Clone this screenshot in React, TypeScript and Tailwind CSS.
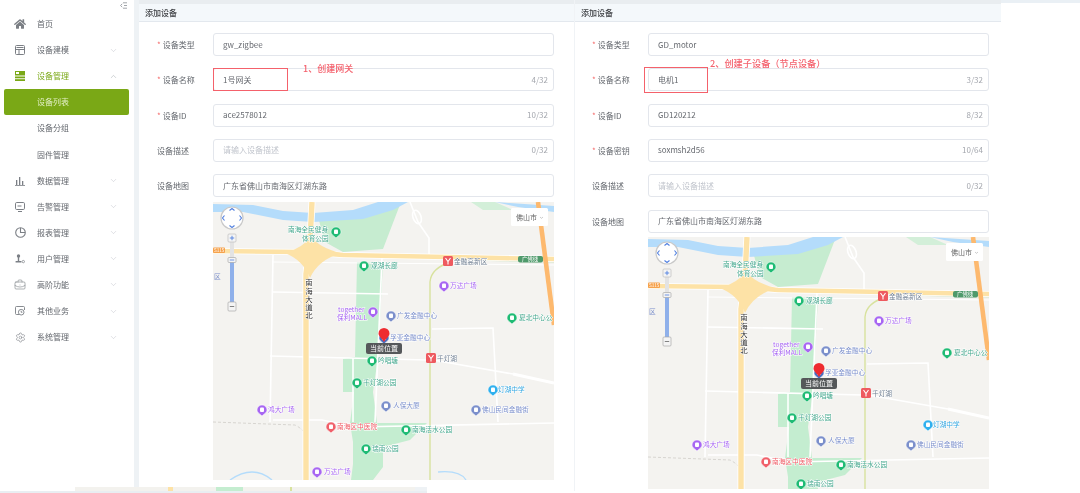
import type { ReactNode } from "react"
import { ChevronDown, ChevronUp, Settings, BriefcaseBusiness } from "lucide-react"
import { FaHome } from "react-icons/fa"

const Model = () => (
  <svg width="10" height="10" viewBox="0 0 10 10" fill="none" stroke="#7b7f85" strokeWidth="1">
    <rect x="0.5" y="0.5" width="9" height="9" rx="1" />
    <path d="M0.5 4.5h9M4 4.5v5M1.5 2.5h7" />
  </svg>
)
const DeviceMgr = () => (
  <svg width="10" height="10" viewBox="0 0 10 10" fill="#7aa816">
    <rect x="0" y="0" width="10" height="4.5" />
    <rect x="0" y="5.5" width="10" height="1.8" />
    <rect x="0" y="8.2" width="10" height="1.8" />
    <rect x="1" y="1" width="3" height="2" fill="#fff" />
  </svg>
)
const Bars = () => (
  <svg width="10" height="10" viewBox="0 0 10 10" fill="#7b7f85">
    <rect x="1" y="4" width="1.3" height="5" />
    <rect x="4" y="1" width="1.3" height="8" />
    <rect x="7" y="5" width="1.3" height="4" />
    <rect x="0" y="9" width="10" height="0.8" />
  </svg>
)
const Alarm = () => (
  <svg width="10" height="10" viewBox="0 0 10 10" fill="none" stroke="#7b7f85" strokeWidth="1">
    <rect x="0.5" y="0.5" width="9" height="7" rx="1.2" />
    <path d="M3 9.5h4M2.5 4h4" />
  </svg>
)
const Report = () => (
  <svg width="11" height="11" viewBox="0 0 11 11" fill="none" stroke="#7b7f85" strokeWidth="1.1">
    <circle cx="5.5" cy="5.5" r="4.8" />
    <path d="M5.5 1v4.5h4.5" />
  </svg>
)
const User = () => (
  <svg width="10" height="10" viewBox="0 0 10 10" fill="#7b7f85">
    <circle cx="3.5" cy="2" r="1.7" />
    <rect x="2.8" y="3" width="1.4" height="4" />
    <rect x="0.5" y="7" width="6" height="1.6" rx="0.5" />
    <circle cx="8.3" cy="7.6" r="1.2" fill="none" stroke="#7b7f85" strokeWidth="0.7" />
  </svg>
)
const Other = () => (
  <svg width="10" height="10" viewBox="0 0 10 10" fill="none" stroke="#7b7f85" strokeWidth="0.9">
    <path d="M4 8.5H1.5a1 1 0 0 1-1-1v-6a1 1 0 0 1 1-1h7a1 1 0 0 1 1 1V4" />
    <circle cx="6.2" cy="6.2" r="2.8" />
    <path d="M6.2 4.8v1.5h1.2" />
  </svg>
)
const Collapse = () => (
  <svg width="7" height="7" viewBox="0 0 7 7" fill="none" stroke="#8a8f96" strokeWidth="0.8">
    <path d="M3 0.8h4M3 6.2h4M4 3.5h3M2.2 1.8L0.6 3.5l1.6 1.7" />
  </svg>
)

const menu: { label: string; icon: ReactNode; arrow?: "up" | "down"; state?: "open" | "active" }[] = [
  { label: "首页", icon: <FaHome size={12} color="#7b7f85" /> },
  { label: "设备建模", icon: <Model />, arrow: "down" },
  { label: "设备管理", icon: <DeviceMgr />, arrow: "up", state: "open" },
  { label: "设备列表", icon: null, state: "active" },
  { label: "设备分组", icon: null },
  { label: "固件管理", icon: null },
  { label: "数据管理", icon: <Bars />, arrow: "down" },
  { label: "告警管理", icon: <Alarm />, arrow: "down" },
  { label: "报表管理", icon: <Report />, arrow: "down" },
  { label: "用户管理", icon: <User />, arrow: "down" },
  { label: "高阶功能", icon: <BriefcaseBusiness size={12} color="#7b7f85" strokeWidth={1.2} />, arrow: "down" },
  { label: "其他业务", icon: <Other />, arrow: "down" },
  { label: "系统管理", icon: <Settings size={11} color="#7b7f85" strokeWidth={1.3} />, arrow: "down" },
]

function Sidebar() {
  return (
    <aside className="w-[134px] shrink-0 bg-white">
      <div className="h-[11px] flex justify-end pr-[7px] pt-[2px]">
        <Collapse />
      </div>
      {menu.map((m) => (
        <div
          key={m.label}
          className={
            m.state === "active"
              ? "h-[26.1px] ml-[4px] mr-[5px] flex items-center rounded-[2px] bg-[#7aa816] text-[8px] text-[#e3efc6]"
              : "h-[26.1px] ml-[4px] mr-[5px] flex items-center text-[8px] " +
                (m.state === "open" ? "text-[#7aa816]" : "text-[#63676d]")
          }
        >
          <span className="w-[33px] pl-[7px] pr-[8px] flex justify-center shrink-0">{m.icon}</span>
          <span className="flex-1">{m.label}</span>
          {m.arrow === "down" && <ChevronDown size={9} color="#b9bdc4" strokeWidth={1.2} className="mr-[11px]" />}
          {m.arrow === "up" && <ChevronUp size={9} color="#9aa0a6" strokeWidth={1.2} className="mr-[11px]" />}
        </div>
      ))}
    </aside>
  )
}

function Field(props: {
  label: string
  required?: boolean
  value?: string
  placeholder?: string
  count?: string
  children?: ReactNode
}) {
  return (
    <div className="flex h-[23px] mb-[12.33px]">
      <label className="w-[56px] shrink-0 text-[8px] leading-[23px] text-[#63676d]">
        {props.required && <span className="text-[#f56c6c] mr-[2px]">*</span>}
        {props.label}
      </label>
      <div className="relative w-[341px] h-[23px] pl-[9px] pr-[5px] flex items-center justify-between border border-[#e3e6ec] rounded-[3px] bg-white text-[8px]">
        {props.value ? (
          <span className="text-[#66696f]">{props.value}</span>
        ) : (
          <span className="text-[#c0c4cc]">{props.placeholder}</span>
        )}
        {props.count && <span className="text-[#a3a6ad]">{props.count}</span>}
        {props.children}
      </div>
    </div>
  )
}

function Poi(p: { x: number; y: number; c: string; t: string; tc: string; lx?: number; ly?: number }) {
  return (
    <g>
      <path
        d={`M${p.x - 5} ${p.y} a5 5 0 1 1 10 0 c0 2.6 -3 4 -5 6 c-2 -2 -5 -3.4 -5 -6z`}
        fill={p.c}
        stroke="#fff"
        strokeWidth="0.5"
      />
      <rect x={p.x - 2} y={p.y - 2.4} width="4" height="4.4" rx="1" fill="#fff" />
      <text
        x={p.lx ?? p.x + 6}
        y={(p.ly ?? p.y) + 2.4}
        fontSize="6.7"
        fill={p.tc}
        stroke="#fff"
        strokeWidth="1"
        className="[paint-order:stroke]"
      >
        {p.t}
      </text>
    </g>
  )
}

function Metro(p: { x: number; y: number; t: string; c: string }) {
  return (
    <g>
      <rect x={p.x - 5} y={p.y - 5} width="10" height="10" rx="1.5" fill="#ee5a5f" />
      <path d="M-2.5 -3 L0 0.5 L2.5 -3 M0 0.5 V3.5" transform={`translate(${p.x} ${p.y})`} stroke="#fff" strokeWidth="1.1" fill="none" />
      <text x={p.x + 6} y={p.y + 3} fontSize="6.7" fill={p.c} stroke="#fff" strokeWidth="1" className="[paint-order:stroke]">
        {p.t}
      </text>
    </g>
  )
}

const green = "#1fbb74"
const gText = "#45a88e"
const purple = "#a766f2"
const slate = "#7b8fcb"

function MapView({ height }: { height: number }) {
  return (
    <svg width="341" height={height} viewBox={`0 0 341 ${height}`} className="block bg-[#f4f3f0]">
      {/* parks */}
      <path d="M105 15 L145 12 L170 0 L188 0 L170 47 L130 50 L112 40Z" fill="#c6ecd0" />
      <path d="M258 0 L282 0 L300 8 L270 8Z" fill="#d3efd9" />
      <path d="M144 60 L170 60 L165 155 L160 190 L164 221 L214 221 L197 238 L170 245 L170 265 L160 278 L138 278 L140 262 L140 240 L137 221 L141 190 L130 190 L130 157 L142 155Z" fill="#c4edd0" />
      {/* water */}
      <path d="M0 2 L40 3 L70 9 L100 11 L140 8 L165 0 L195 0 L180 8 L150 17 L100 20 L70 18 L30 10 L0 10Z" fill="#b4dcfb" />
      <path d="M282 0 L341 4 L341 10 L305 5Z" fill="#b4dcfb" />
      <path d="M17 278 Q40 262 59 278 M225 270 Q247 268 253 278" stroke="#b4dcfb" strokeWidth="1.4" fill="none" />
      {/* white roads */}
      <g stroke="#fff" strokeWidth="1.6" fill="none">
        <path d="M60 53 L57 220" />
        <path d="M60 90 L175 92" />
        <path d="M57 154 L214 158" />
        <path d="M220 158 L300 172" />
        <path d="M300 172 L341 181" strokeWidth="3" />
        <path d="M169 56 L162 220" />
        <path d="M140 156 L140 220" />
        <path d="M197 0 L205 20 L216 36 L216 55" />
        <ellipse cx="204" cy="15" rx="4" ry="7" transform="rotate(-20 204 15)" />
        <path d="M219 127 L280 126 L285 220" />
        <path d="M60 218 L109 218 L142 225 L341 221" />
        <path d="M60 60 L341 63" strokeWidth="1" />
      </g>
      <path d="M0 220 L82 223 Q92 228 94 236" stroke="#cfcdc8" strokeWidth="0.8" strokeDasharray="3 2" fill="none" />
      {/* metro line */}
      <path d="M238 60 Q218 66 217 80 L217 300" stroke="#d8e29e" strokeWidth="1.4" fill="none" />
      <path d="M255 58 L341 60" stroke="#cfe5c5" strokeWidth="1" />
      {/* main roads */}
      <path d="M0 49 L90 50 L130 53 L341 57" stroke="#fff" strokeWidth="6" fill="none" />
      <path d="M0 49 L90 50 L130 53 L341 57" stroke="#fde2a6" strokeWidth="4.4" fill="none" />
      <path d="M99 0 L97 40 L93 72 L93 300" stroke="#fff" strokeWidth="7" fill="none" />
      <path d="M99 0 L97 40 L93 72 L93 300" stroke="#fde2a6" strokeWidth="5.4" fill="none" />
      <path d="M72 51 Q90 46 98 34 Q106 46 128 51 Q105 58 97 76 Q90 58 72 51Z" fill="#fde2a6" />
      <path d="M325 0 L341 123" stroke="#fdb96e" strokeWidth="4.6" fill="none" />
      <rect x="0" y="45.5" width="12" height="5.5" rx="1" fill="#f6a24c" />
      <text x="1" y="50" fontSize="4.6" fill="#fff">S115</text>
      <rect x="305" y="54" width="25" height="6.4" rx="2" fill="#4f9a6b" />
      <text x="309" y="59.2" fontSize="5.4" fill="#fff">广佛线</text>
      <text x="1" y="77" fontSize="6.7" fill={slate}>区</text>

      <text fontSize="7.4" fill="#333" stroke="#fff" strokeWidth="1" className="[paint-order:stroke]" textAnchor="middle">
        <tspan x="96" y="83">南</tspan>
        <tspan x="96" y="91.5">海</tspan>
        <tspan x="96" y="100">大</tspan>
        <tspan x="96" y="108">道</tspan>
        <tspan x="96" y="116">北</tspan>
      </text>

      {/* labels */}
      <text fontSize="6.7" fill={gText} stroke="#fff" strokeWidth="1" className="[paint-order:stroke]">
        <tspan x="75" y="30">南海全民健身</tspan>
        <tspan x="89" y="39">体育公园</tspan>
      </text>
      <Poi x={123} y={30} c={green} t="" tc={gText} />
      <Poi x={151} y={64} c={green} t="观湖长廊" tc={gText} lx={158} />
      <Metro x={235} y={59} t="金融高新区" c="#6f7f92" />
      <Poi x={231} y={84} c={purple} t="万达广场" tc={purple} lx={237} />
      <text fontSize="6.7" fill={purple} stroke="#fff" strokeWidth="1" className="[paint-order:stroke]">
        <tspan x="125" y="110">together</tspan>
        <tspan x="124" y="118">保利MALL</tspan>
      </text>
      <Poi x={160} y={110} c={purple} t="" tc={purple} />
      <Poi x={178} y={114} c={slate} t="广发金融中心" tc={slate} lx={184} />
      <Poi x={299} y={116} c={green} t="夏北中心公" tc={gText} lx={306} />
      <Poi x={171} y={136} c="#4a6fc0" t="孚亚金融中心" tc={slate} lx={177} />
      <Poi x={159} y={159} c={green} t="吟唱塘" tc={gText} lx={165} />
      <Metro x={218} y={156} t="千灯湖" c="#6f7f92" />
      <Poi x={144} y={181} c={green} t="千灯湖公园" tc={gText} lx={150} />
      <Poi x={280} y={188} c="#2fb0ee" t="灯湖中学" tc="#35a7e0" lx={285} />
      <Poi x={173} y={204} c={slate} t="人保大厦" tc={slate} lx={180} />
      <Poi x={263} y={208} c={slate} t="佛山民间金融街" tc={slate} lx={269} />
      <Poi x={49} y={208} c={purple} t="鸿大广场" tc={purple} lx={55} />
      <Poi x={118} y={225} c="#f0606a" t="南海区中医院" tc="#f0606a" lx={124} />
      <Poi x={193} y={228} c={green} t="南海活水公园" tc={gText} lx={199} />
      <Poi x={153} y={247} c={green} t="瑞南公园" tc={gText} lx={159} />
      <Poi x={104} y={270} c={purple} t="万达广场" tc={purple} lx={111} />

      {/* current position */}
      <path d="M165.5 131.5 a5.5 5.5 0 1 1 11 0 c0 3 -3.5 5 -5.5 8.5 c-2 -3.5 -5.5 -5.5 -5.5 -8.5z" fill="#ee2b30" />
      <rect x="153" y="141" width="36" height="11" rx="2" fill="#55585a" />
      <text x="171" y="149" fontSize="7" fill="#fff" textAnchor="middle">当前位置</text>

      {/* zoom control */}
      <circle cx="19" cy="16" r="11" fill="#fff" stroke="#c9c9c9" strokeWidth="1.2" />
      <path d="M16.5 8.5 L19 6.5 L21.5 8.5 M16.5 23.5 L19 25.5 L21.5 23.5 M11.5 13.5 L9.5 16 L11.5 18.5 M26.5 13.5 L28.5 16 L26.5 18.5" stroke="#4f7fe0" strokeWidth="1.1" fill="none" />
      <rect x="17" y="40" width="4" height="18" fill="#e3e3e3" />
      <rect x="17" y="58" width="4" height="42" fill="#8fb0ea" />
      <rect x="15" y="32" width="8" height="8" rx="1" fill="#f4f4f4" stroke="#bdbdbd" strokeWidth="0.7" />
      <path d="M16.8 36 h4.4 M19 33.8 v4.4" stroke="#4f7fe0" strokeWidth="0.9" />
      <rect x="15" y="55.5" width="8" height="5" rx="1" fill="#f4f4f4" stroke="#a9a9a9" strokeWidth="0.7" />
      <path d="M16.8 58 h4.4" stroke="#4f7fe0" strokeWidth="0.8" />
      <rect x="15" y="100" width="8" height="9" rx="1" fill="#f4f4f4" stroke="#a9a9a9" strokeWidth="0.7" />
      <path d="M16.8 104.5 h4.4" stroke="#666" strokeWidth="0.8" />

      {/* city picker */}
      <rect x="298" y="6" width="37" height="18" rx="1.5" fill="#fff" />
      <text x="303" y="17.5" fontSize="7" fill="#666">佛山市</text>
      <path d="M327 15 l1.5 1.3 l1.5 -1.3" stroke="#aaa" strokeWidth="0.6" fill="none" />
    </svg>
  )
}

function PanelHeader() {
  return (
    <>
      <div className="h-[4px] bg-[#e9edf0]" />
      <div className="h-[18px] bg-[#f4f8fb] border-b border-[#e3e8ee] pl-[6px] text-[8px] leading-[17px] font-medium text-[#3d3f43]">
        添加设备
      </div>
    </>
  )
}

const ADDR = "广东省佛山市南海区灯湖东路"

export default function App() {
  return (
    <div className="relative w-[1080px] h-[493px] overflow-hidden bg-white font-['Noto_Sans_CJK_SC','Noto_Sans',sans-serif] blur-[0.4px]">
      <div className="flex h-[491px]">
        <Sidebar />
        <div className="w-[5px] shrink-0 bg-[#eef2f5]" />

        <section className="w-[435px] shrink-0 bg-white">
          <PanelHeader />
          <div className="pl-[18px] pt-[11px]">
            <Field label="设备类型" required value="gw_zigbee" />
            <Field label="设备名称" required value="1号网关" count="4/32">
              <div className="absolute left-[-1px] top-[-1px] w-[75px] h-[23px] border-[1.5px] border-[#f4616b]" />
              <span className="absolute left-[89px] top-[-6px] text-[9px] leading-[12px] font-medium whitespace-nowrap text-[#f4606c]">
                1、创建网关
              </span>
            </Field>
            <Field label="设备ID" required value="ace2578012" count="10/32" />
            <Field label="设备描述" placeholder="请输入设备描述" count="0/32" />
            <Field label="设备地图" value={ADDR} />
            <div className="ml-[56px] mt-[-8px]">
              <MapView height={278} />
            </div>
          </div>
        </section>

        <section className="w-[427px] shrink-0 bg-white border-l border-[#f0f3f6]">
          <PanelHeader />
          <div className="pl-[17px] pt-[11px]">
            <Field label="设备类型" required value="GD_motor" />
            <Field label="设备名称" required value="电机1" count="3/32">
              <div className="absolute left-[-5px] top-[-2px] w-[64px] h-[26px] border-[1.5px] border-[#f4616b]" />
              <span className="absolute left-[61px] top-[-12px] text-[9.2px] leading-[12px] font-medium whitespace-nowrap text-[#f4606c]">
                2、创建子设备（节点设备）
              </span>
            </Field>
            <Field label="设备ID" required value="GD120212" count="8/32" />
            <Field label="设备密钥" required value="soxmsh2d56" count="10/64" />
            <Field label="设备描述" placeholder="请输入设备描述" count="0/32" />
            <Field label="设备地图" value={ADDR} />
            <div className="ml-[56px] mt-[-8px]">
              <MapView height={252} />
            </div>
          </div>
        </section>

        <div className="flex-1">
          <div className="h-[3px] bg-[#eaf0f5]" />
        </div>
      </div>

      <div className="flex h-[2px]">
        <div className="w-[427px] bg-[#e9eef2]" />
      </div>

      {/* leftover strip of the screenshot below the panels */}
      <div className="absolute left-[75px] top-[487px] h-[4px] flex">
        <div className="w-[93px] bg-[#f3f2ee]" />
        <div className="w-[5px] bg-[#fde2a6]" />
        <div className="w-[43px] bg-[#f3f2ee]" />
        <div className="w-[27px] bg-[#c4edd0]" />
        <div className="w-[47px] bg-[#f3f2ee]" />
        <div className="w-[2px] bg-[#d8e29e]" />
        <div className="w-[123px] bg-[#f3f2ee]" />
        <div className="w-[12px] bg-[#eef2f5]" />
      </div>
    </div>
  )
}
